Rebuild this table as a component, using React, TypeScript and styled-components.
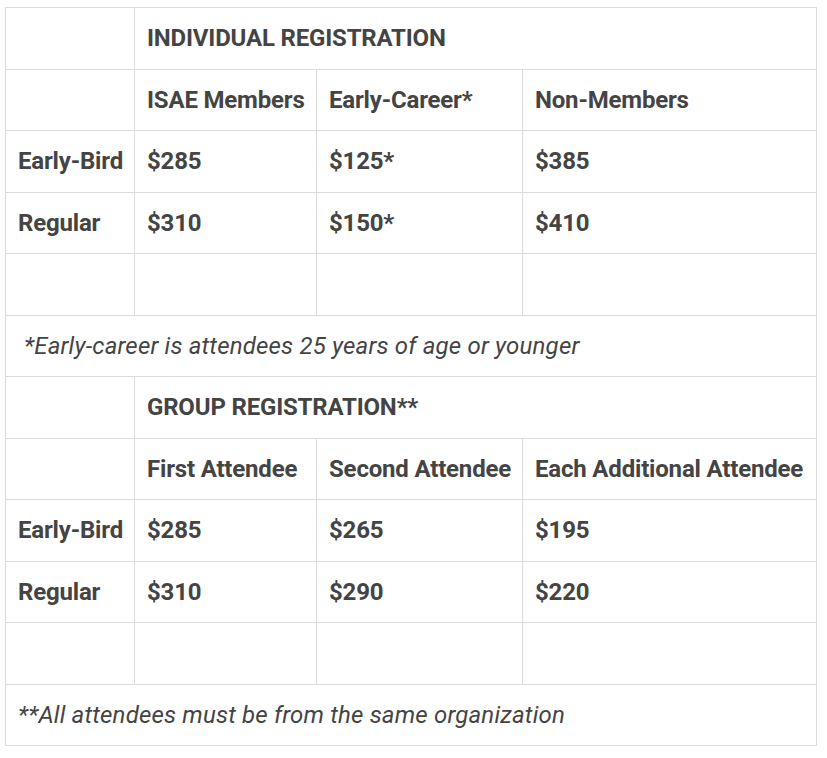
import React from "react";
import styled, { createGlobalStyle } from "styled-components";

const Global = createGlobalStyle`
  html, body { margin: 0; padding: 0; background: #fff; }
  body { font-family: Roboto, "Liberation Sans", sans-serif; }
`;

const Wrap = styled.div`
  padding: 7px 0 0 5px;
`;

const Table = styled.table`
  border-collapse: collapse;
  table-layout: fixed;
  width: 811px;
  color: #444;
  font-size: 24px;
  line-height: 28px;
`;

const Cell = styled.td<{ $italic?: boolean; $indent?: boolean }>`
  border: 1px solid #dcdcdc;
  height: 61.5px;
  box-sizing: border-box;
  padding: 0 12px;
  vertical-align: middle;
  font-weight: ${(p) => (p.$italic ? 400 : 700)};
  font-style: ${(p) => (p.$italic ? "italic" : "normal")};
  letter-spacing: ${(p) => (p.$italic ? "0.19px" : "-0.18px")};
  white-space: nowrap;
  overflow: visible;
  ${(p) => (p.$indent ? "padding-left: 18px;" : "")}
`;

const Row = styled.tr``;

type Section = {
  title: string;
  heads: string[];
  rows: [string, string, string, string][];
  note: string;
  indent?: boolean;
};

const sections: Section[] = [
  {
    title: "INDIVIDUAL REGISTRATION",
    heads: ["ISAE Members", "Early-Career*", "Non-Members"],
    rows: [
      ["Early-Bird", "$285", "$125*", "$385"],
      ["Regular", "$310", "$150*", "$410"],
    ],
    note: "*Early-career is attendees 25 years of age or younger",
    indent: true,
  },
  {
    title: "GROUP REGISTRATION**",
    heads: ["First Attendee", "Second Attendee", "Each Additional Attendee"],
    rows: [
      ["Early-Bird", "$285", "$265", "$195"],
      ["Regular", "$310", "$290", "$220"],
    ],
    note: "**All attendees must be from the same organization",
  },
];

export default function App() {
  return (
    <>
      <Global />
      <Wrap>
        <Table>
          <colgroup>
            <col style={{ width: 129 }} />
            <col style={{ width: 182 }} />
            <col style={{ width: 206 }} />
            <col style={{ width: 294 }} />
          </colgroup>
          <tbody>
            {sections.map((s) => (
              <React.Fragment key={s.title}>
                <Row>
                  <Cell />
                  <Cell colSpan={3}>{s.title}</Cell>
                </Row>
                <Row>
                  <Cell />
                  {s.heads.map((h) => (
                    <Cell key={h}>{h}</Cell>
                  ))}
                </Row>
                {s.rows.map((r) => (
                  <Row key={r[0]}>
                    {r.map((c, i) => (
                      <Cell key={i}>{c}</Cell>
                    ))}
                  </Row>
                ))}
                <Row>
                  <Cell />
                  <Cell />
                  <Cell />
                  <Cell />
                </Row>
                <Row>
                  <Cell colSpan={4} $italic $indent={s.indent}>
                    {s.note}
                  </Cell>
                </Row>
              </React.Fragment>
            ))}
          </tbody>
        </Table>
      </Wrap>
    </>
  );
}
